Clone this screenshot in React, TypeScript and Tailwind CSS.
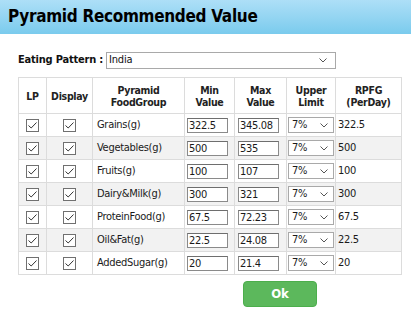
import React from 'react';

const ROWS = [
  { name: 'Grains(g)', min: '322.5', max: '345.08', rpfg: '322.5' },
  { name: 'Vegetables(g)', min: '500', max: '535', rpfg: '500' },
  { name: 'Fruits(g)', min: '100', max: '107', rpfg: '100' },
  { name: 'Dairy&Milk(g)', min: '300', max: '321', rpfg: '300' },
  { name: 'ProteinFood(g)', min: '67.5', max: '72.23', rpfg: '67.5' },
  { name: 'Oil&Fat(g)', min: '22.5', max: '24.08', rpfg: '22.5' },
  { name: 'AddedSugar(g)', min: '20', max: '21.4', rpfg: '20' },
];

const Chevron: React.FC = () => (
  <svg className="w-[8px] h-[5px]" viewBox="0 0 8 5" fill="none" stroke="#555" strokeWidth={1}>
    <path d="M0.5 0.5 L4 4 L7.5 0.5" />
  </svg>
);

const Check: React.FC = () => (
  <div className="w-[13px] h-[13px] mx-auto border border-[#707070] bg-white flex items-center justify-center">
    <svg className="w-[9px] h-[7px]" viewBox="0 0 9 7" fill="none" stroke="#333" strokeWidth={1}>
      <path d="M0.5 3.5 L3.2 6 L8.5 0.5" />
    </svg>
  </div>
);

const App: React.FC = () => {
  return (
    <div className="w-[411px] h-[314px] bg-white overflow-hidden" style={{ fontFamily: '"DejaVu Sans Condensed", sans-serif' }}>
      <div className="h-[34px] bg-gradient-to-b from-[#addff7] to-[#7acbed] flex items-center pl-[8px]">
        <h1 className="text-[17px] font-bold text-black tracking-[-0.3px]">Pyramid Recommended Value</h1>
      </div>

      <div className="mt-[18px] ml-[18px] flex items-center h-[16px]">
        <span className="text-[11px] font-bold text-[#111] mr-[3px] tracking-[-0.2px]">Eating Pattern :</span>
        <div className="w-[230px] h-[17px] border border-[#a9a9a9] flex items-center justify-between pl-[2px] pr-[8px] text-[11px] text-[#111] tracking-[-0.2px]">
          <span>India</span>
          <Chevron />
        </div>
      </div>

      <table className="mt-[9px] ml-[18px] w-[383px] table-fixed border-collapse text-[11px] tracking-[-0.3px] text-[#1a1a1a]">
        <colgroup>
          <col className="w-[28px]" />
          <col className="w-[46px]" />
          <col className="w-[92px]" />
          <col className="w-[50px]" />
          <col className="w-[52px]" />
          <col className="w-[49px]" />
          <col className="w-[66px]" />
        </colgroup>
        <thead>
          <tr className="h-[36px] font-bold text-[10.5px] leading-[12px] text-[#222]">
            <th className="border border-[#dcdcdc]">LP</th>
            <th className="border border-[#dcdcdc]">Display</th>
            <th className="border border-[#dcdcdc]">Pyramid<br />FoodGroup</th>
            <th className="border border-[#dcdcdc]">Min<br />Value</th>
            <th className="border border-[#dcdcdc]">Max<br />Value</th>
            <th className="border border-[#dcdcdc]">Upper<br />Limit</th>
            <th className="border border-[#dcdcdc]">RPFG<br />(PerDay)</th>
          </tr>
        </thead>
        <tbody>
          {ROWS.map((r, i) => (
            <tr key={r.name} className={`h-[23px] ${i % 2 === 1 ? 'bg-[#f2f2f2]' : 'bg-white'}`}>
              <td className="border border-[#dcdcdc]"><Check /></td>
              <td className="border border-[#dcdcdc]"><Check /></td>
              <td className="border border-[#dcdcdc] pl-[4px]">{r.name}</td>
              <td className="border border-[#dcdcdc] pl-[2px]">
                <div className="w-[41px] h-[15px] bg-white border border-[#8a8a8a] border-t-[#6e6e6e] pl-[1px] leading-[14px] overflow-hidden">{r.min}</div>
              </td>
              <td className="border border-[#dcdcdc] pl-[3px]">
                <div className="w-[41px] h-[15px] bg-white border border-[#8a8a8a] border-t-[#6e6e6e] pl-[1px] leading-[14px] overflow-hidden">{r.max}</div>
              </td>
              <td className="border border-[#dcdcdc] pl-[1px]">
                <div className="w-[46px] h-[16px] bg-white border border-[#a9a9a9] flex items-center justify-between pl-[3px] pr-[5px]">
                  <span>7%</span>
                  <Chevron />
                </div>
              </td>
              <td className="border border-[#dcdcdc] pl-[2px]">{r.rpfg}</td>
            </tr>
          ))}
        </tbody>
      </table>

      <button className="mt-[6px] ml-[243px] w-[74px] h-[26px] rounded-[4px] bg-[#5cb85c] border border-[#4cae4c] text-white font-bold text-[13px] flex items-center justify-center">
        Ok
      </button>
    </div>
  );
};

export default App;
